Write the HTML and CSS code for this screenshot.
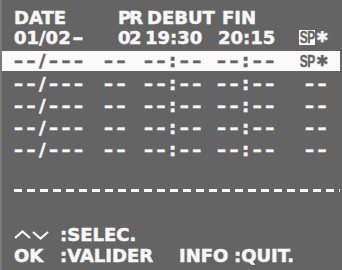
FILE: index.html
```html
<!DOCTYPE html>
<html>

<head>
    <meta charset="UTF-8">
    <title>Programmation</title>
    <link rel="stylesheet" href="styles.css">
</head>

<body>
    <div class="screen">
        <div class="row head">
            <span class="c1">DATE</span>
            <span class="c2">PR</span>
            <span class="c3h">DEBUT</span>
            <span>FIN</span>
        </div>
        <div class="row data">
            <span class="c1">01/02<span class="hy">-</span></span>
            <span class="c2">02</span>
            <span class="c3">19:30</span>
            <span class="c4">20:15</span>
            <span class="c5"><span class="sp boxed"><span class="spt">SP</span></span><span class="star">&#10033;</span></span>
        </div>
        <div class="row sel dash">
            <span class="d1">––/–––</span>
            <span class="d2">––</span>
            <span class="d3">––:––</span>
            <span class="d4">––:––</span>
            <span class="d5 mark"><span class="sp"><span class="spt">SP</span></span><span class="star">&#10033;</span></span>
        </div>
        <div class="row dash">
            <span class="d1">––/–––</span>
            <span class="d2">––</span>
            <span class="d3">––:––</span>
            <span class="d4">––:––</span>
            <span class="d5">––</span>
        </div>
        <div class="row dash">
            <span class="d1">––/–––</span>
            <span class="d2">––</span>
            <span class="d3">––:––</span>
            <span class="d4">––:––</span>
            <span class="d5">––</span>
        </div>
        <div class="row dash">
            <span class="d1">––/–––</span>
            <span class="d2">––</span>
            <span class="d3">––:––</span>
            <span class="d4">––:––</span>
            <span class="d5">––</span>
        </div>
        <div class="row dash">
            <span class="d1">––/–––</span>
            <span class="d2">––</span>
            <span class="d3">––:––</span>
            <span class="d4">––:––</span>
            <span class="d5">––</span>
        </div>

        <div class="rule"></div>

        <div class="keys">
            <div class="row">
                <span class="k1">
                    <svg width="36" height="10" viewBox="0 0 36 10">
                        <polyline points="1,8 8.5,1.5 16,8" fill="none" stroke="#f7f7f7" stroke-width="2.2" />
                        <polyline points="19,2 26.5,8.5 34,2" fill="none" stroke="#f7f7f7" stroke-width="2.2" />
                    </svg>
                </span>
                <span>:SELEC.</span>
            </div>
            <div class="row">
                <span class="k1">OK</span>
                <span class="k2">:VALIDER</span>
                <span class="k3">INFO</span>
                <span>:QUIT.</span>
            </div>
        </div>
    </div>
</body>

</html>
```

FILE: styles.css
```css
/* Screen */
body {
    margin: 0;
    background-color: #646464;
    font-family: "DejaVu Sans", sans-serif;
    font-weight: bold;
    font-size: 18px;
    color: #f7f7f7;
    -webkit-text-stroke: 0.5px currentColor;
}

.screen {
    width: 340px;
    height: 270px;
    border-left: 2px solid #7a7a7a;
    padding-top: 7px;
    box-sizing: border-box;
    overflow: hidden;
}

.row {
    display: flex;
    align-items: center;
    height: 21px;
    line-height: 21px;
    padding-left: 12px;
    white-space: nowrap;
}

.row > span {
    flex: none;
}

.head {
    height: 20px;
}

/* Header and filled row */
.c1 {
    width: 104px;
}

.hy {
    display: inline-block;
    transform: scaleX(1.5);
    margin-left: 3px;
}

.c2 {
    width: 27px;
    letter-spacing: -1.5px;
}

.head .c2 {
    width: 29px;
    letter-spacing: -2px;
}

.c3 {
    width: 73px;
}

.c3h {
    width: 75px;
}

.c4 {
    width: 81px;
}

.c5 {
    display: flex;
    align-items: center;
}

/* Empty rows */
.dash {
    height: 22px;
    line-height: 22px;
    letter-spacing: 3.5px;
}

.d1 {
    width: 90px;
}

.d2 {
    width: 40px;
}

.d3 {
    width: 73px;
}

.d4 {
    width: 88px;
}

.d5.mark {
    display: flex;
    align-items: center;
    margin-left: -6px;
}

.sel {
    height: 20px;
    line-height: 20px;
    margin-top: 3px;
    margin-bottom: 2px;
    background-color: #fafafa;
    color: #646464;
}

/* SP marker */
.sp {
    display: inline-block;
    width: 16px;
    height: 15px;
    line-height: 16px;
    font-family: "Liberation Sans", sans-serif;
    font-size: 17px;
    letter-spacing: -0.5px;
    -webkit-text-stroke: 0.4px currentColor;
}

.spt {
    display: inline-block;
    transform: scaleX(0.7);
    transform-origin: left center;
    padding-left: 1px;
    margin-right: -8px;
}

.boxed {
    background-color: #fafafa;
    color: #646464;
}

.star {
    font-size: 15px;
    margin-left: 1px;
    letter-spacing: 0;
    -webkit-text-stroke: 0.3px currentColor;
}

/* Bottom */
.rule {
    height: 3px;
    margin: 28px 0 0 12px;
    background: repeating-linear-gradient(to right, #f7f7f7 0, #f7f7f7 8px, transparent 8px, transparent 13px);
}

.keys {
    margin-top: 32px;
}

.k1 {
    width: 46px;
    display: flex;
    align-items: center;
}

.k2 {
    width: 119px;
}

.k3 {
    width: 55px;
}
```
